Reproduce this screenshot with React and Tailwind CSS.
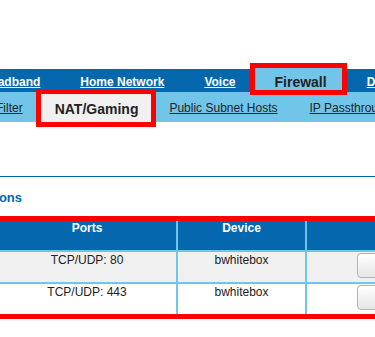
export default function App() {
  const navItems = ['Broadband', 'Home Network', 'Voice']
  const rows = [
    { ports: 'TCP/UDP: 80', device: 'bwhitebox', bg: 'bg-[#f0f0f0]' },
    { ports: 'TCP/UDP: 443', device: 'bwhitebox', bg: 'bg-white' },
  ]

  return (
    <div className="w-[375px] h-[337px] overflow-hidden bg-white font-['Liberation_Sans',Arial,sans-serif] text-[12px] text-[#222]">
      <div className="h-[69px]" />

      {/* Main navigation */}
      <nav className="h-[23px] bg-[#0568ae] flex items-start whitespace-nowrap">
        <div className="flex ml-[-43px]">
          {navItems.map((item) => (
            <a key={item} className="h-[23px] px-[20px] pt-[6px] leading-[14px] font-bold text-white underline">
              {item}
            </a>
          ))}
        </div>
        <div className="relative z-10 shrink-0 ml-[-6px] mt-[-6px] h-[32px] border-[5px] border-[#ff0000] bg-[#71c5e8] pl-[20px] pr-[15px] pt-[6px] text-[14px] leading-[16px] font-bold text-[#222]">
          Firewall
        </div>
        <a className="h-[23px] px-[20px] pt-[6px] leading-[14px] font-bold text-white underline">Diagnostics</a>
      </nav>

      {/* Sub navigation */}
      <div className="h-[30px] bg-[#71c5e8] flex items-start whitespace-nowrap">
        <a className="shrink-0 ml-[-60px] px-[16px] pt-[9px] leading-[14px] underline">Packet Filter</a>
        <div className="relative z-10 shrink-0 ml-[-3px] mr-[-3px] mt-[-3px] h-[38px] border-[5px] border-[#ff0000] bg-[#f0f0f0] pl-[14px] pr-[13px] pt-[7px] text-[14px] leading-[16px] font-bold">
          NAT/Gaming
        </div>
        <a className="shrink-0 px-[16px] pt-[9px] leading-[14px] underline">Public Subnet Hosts</a>
        <a className="shrink-0 px-[16px] pt-[9px] leading-[14px] underline">IP Passthrough</a>
      </div>

      <div className="mt-[54px] h-px bg-[#0568ae]" />

      {/* Section heading */}
      <div className="mt-[13px] w-[22px] flex justify-end whitespace-nowrap">
        <h2 className="text-[13px] leading-[15px] font-bold text-[#0568ae]">Hosted Applications</h2>
      </div>

      {/* Table */}
      <div className="mt-[11px] ml-[-2px] w-[440px] border-y-[5px] border-[#ff0000]">
        <div className="flex h-[29px] bg-[#0568ae] text-white font-bold leading-[14px]">
          <div className="w-[180px] shrink-0 border-r-2 border-[#71c5e8] text-center">Ports</div>
          <div className="w-[129px] shrink-0 border-r-2 border-[#71c5e8] text-center">Device</div>
          <div className="flex-1 min-w-0" />
        </div>
        {rows.map((row) => (
          <div key={row.ports} className={`flex h-[32px] border-t-2 border-[#71c5e8] leading-[14px] ${row.bg}`}>
            <div className="w-[180px] shrink-0 border-r-2 border-[#71c5e8] pt-px text-center">{row.ports}</div>
            <div className="w-[129px] shrink-0 border-r-2 border-[#71c5e8] pt-px text-center">{row.device}</div>
            <div className="flex-1 min-w-0 pl-[50px] pt-px">
              <button className="h-[25px] w-[80px] rounded-[4px] border border-[#b4b4b4] bg-gradient-to-b from-white to-[#e6e6e6] pl-[30px] text-left text-[12px] text-[#222]">
                Delete
              </button>
            </div>
          </div>
        ))}
      </div>
    </div>
  )
}
